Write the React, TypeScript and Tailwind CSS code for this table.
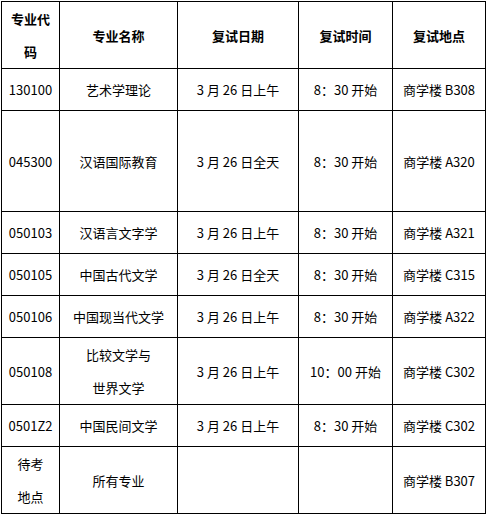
/**
 * 复试安排表
 */

type Row = {
  code: string[];
  name: string[];
  date: string;
  time: string;
  place: string;
  h: string;
};

const ROWS: Row[] = [
  { code: ['130100'], name: ['艺术学理论'], date: '3 月 26 日上午', time: '8：30 开始', place: '商学楼 B308', h: 'h-[42px]' },
  { code: ['045300'], name: ['汉语国际教育'], date: '3 月 26 日全天', time: '8：30 开始', place: '商学楼 A320', h: 'h-[101px]' },
  { code: ['050103'], name: ['汉语言文字学'], date: '3 月 26 日上午', time: '8：30 开始', place: '商学楼 A321', h: 'h-[42px]' },
  { code: ['050105'], name: ['中国古代文学'], date: '3 月 26 日全天', time: '8：30 开始', place: '商学楼 C315', h: 'h-[42px]' },
  { code: ['050106'], name: ['中国现当代文学'], date: '3 月 26 日上午', time: '8：30 开始', place: '商学楼 A322', h: 'h-[42px]' },
  { code: ['050108'], name: ['比较文学与', '世界文学'], date: '3 月 26 日上午', time: '10：00 开始', place: '商学楼 C302', h: 'h-[67px]' },
  { code: ['0501Z2'], name: ['中国民间文学'], date: '3 月 26 日上午', time: '8：30 开始', place: '商学楼 C302', h: 'h-[42px]' },
  { code: ['待考', '地点'], name: ['所有专业'], date: '', time: '', place: '商学楼 B307', h: 'h-[67px]' },
];

const cell = 'border border-black text-center align-middle p-0 leading-[33px]';

function Lines({ lines }: { lines: string[] }) {
  return (
    <>
      {lines.map((l) => (
        <div key={l}>{l}</div>
      ))}
    </>
  );
}

export default function App() {
  return (
    <div className="bg-white w-[487px] h-[515px] pl-[1px] pt-[1px] text-[13px] text-black"
      style={{ fontFamily: '"Noto Sans CJK SC", "Noto Sans", sans-serif' }}>
      <table className="table-fixed border-collapse w-[484px]">
        <colgroup>
          <col className="w-[58px]" />
          <col className="w-[118px]" />
          <col className="w-[121px]" />
          <col className="w-[94px]" />
          <col className="w-[93px]" />
        </colgroup>
        <thead>
          <tr className="h-[67px] font-bold">
            <th className={cell}><Lines lines={['专业代', '码']} /></th>
            <th className={cell}>专业名称</th>
            <th className={cell}>复试日期</th>
            <th className={cell}>复试时间</th>
            <th className={cell}>复试地点</th>
          </tr>
        </thead>
        <tbody>
          {ROWS.map((r) => (
            <tr key={r.code.join('')} className={r.h}>
              <td className={cell}><Lines lines={r.code} /></td>
              <td className={cell}><Lines lines={r.name} /></td>
              <td className={cell}>{r.date}</td>
              <td className={cell}>{r.time}</td>
              <td className={cell}>{r.place}</td>
            </tr>
          ))}
        </tbody>
      </table>
    </div>
  );
}
